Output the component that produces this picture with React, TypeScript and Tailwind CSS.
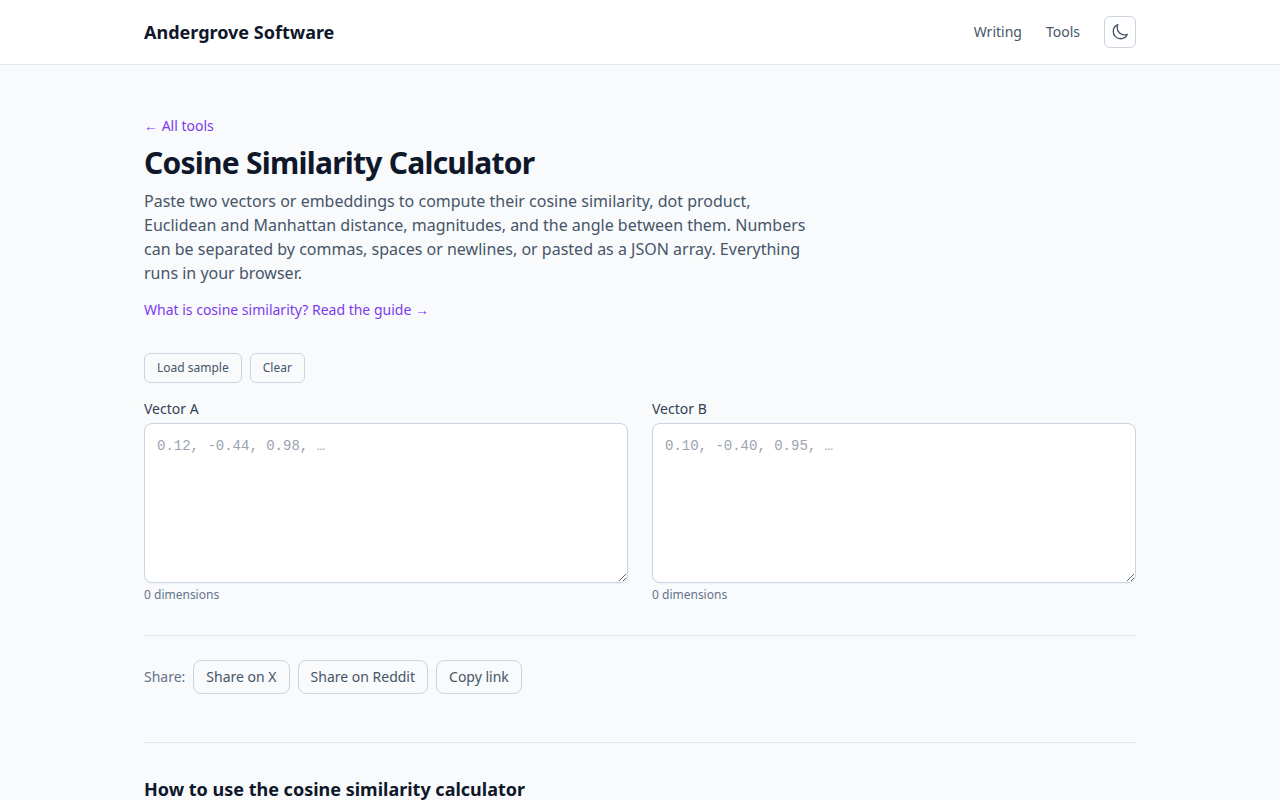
import { useState } from "react";

const SAMPLE_A = "0.12, -0.44, 0.98, 0.31";
const SAMPLE_B = "0.10, -0.40, 0.95, 0.28";

function parseVector(text: string): number[] {
  return text
    .replace(/[[\]]/g, " ")
    .split(/[\s,]+/)
    .filter(Boolean)
    .map(Number)
    .filter((value) => Number.isFinite(value));
}

type VectorFieldProps = {
  id: string;
  label: string;
  placeholder: string;
  value: string;
  onChange: (value: string) => void;
};

function VectorField({ id, label, placeholder, value, onChange }: VectorFieldProps) {
  return (
    <div>
      <label htmlFor={id} className="mb-1 block text-sm text-[#334155]">
        {label}
      </label>
      <textarea
        id={id}
        value={value}
        onChange={(event) => onChange(event.target.value)}
        placeholder={placeholder}
        spellCheck={false}
        className="block h-40 w-full rounded-lg border border-[#cbd5e1] bg-white p-3 font-['Liberation_Mono',monospace] text-sm text-slate-900 shadow-[0_1px_2px_0_rgb(0_0_0/0.05)] placeholder:text-[#9ca3af]"
      />
      <p className="mt-1 text-xs text-[#64748b]">{parseVector(value).length} dimensions</p>
    </div>
  );
}

export default function App() {
  const [vectorA, setVectorA] = useState("");
  const [vectorB, setVectorB] = useState("");

  function loadSample() {
    setVectorA(SAMPLE_A);
    setVectorB(SAMPLE_B);
  }

  function clear() {
    setVectorA("");
    setVectorB("");
  }

  const smallButton =
    "rounded-md border border-[#cbd5e1] px-3 py-1.5 text-xs text-[#475569] hover:bg-slate-100";
  const shareButton =
    "rounded-lg border border-[#cbd5e1] px-3 py-1.5 text-sm text-[#475569] hover:bg-slate-100";

  return (
    <div className="min-h-screen bg-[#f8fafc] font-['Noto_Sans',sans-serif] text-[#0f172a]">
      <header className="border-b border-[#e2e8f0] bg-white">
        <div className="mx-auto flex max-w-5xl items-center justify-between px-4 py-4">
          <a href="#" className="text-lg font-bold">
            Andergrove Software
          </a>
          <nav className="flex items-center gap-6 text-sm text-[#475569]">
            <a href="#writing">Writing</a>
            <a href="#tools">Tools</a>
            <button
              type="button"
              aria-label="Toggle dark mode"
              className="flex size-8 items-center justify-center rounded-md border border-[#cbd5e1]"
            >
              <svg
                viewBox="0 0 24 24"
                className="size-[18px]"
                fill="none"
                stroke="currentColor"
                strokeWidth={1.8}
                strokeLinecap="round"
                strokeLinejoin="round"
              >
                <path d="M21.752 15.002A9.72 9.72 0 0 1 18 15.75c-5.385 0-9.75-4.365-9.75-9.75 0-1.33.266-2.597.748-3.752A9.753 9.753 0 0 0 3 11.25C3 16.635 7.365 21 12.75 21a9.753 9.753 0 0 0 9.002-5.998Z" />
              </svg>
            </button>
          </nav>
        </div>
      </header>

      <main className="mx-auto max-w-5xl px-4 py-12">
        <a href="#tools" className="text-sm text-[#7c3aed] hover:underline">
          ← All tools
        </a>
        <h1 className="mt-2 text-3xl font-bold tracking-tight">Cosine Similarity Calculator</h1>
        <p className="mt-2 max-w-2xl text-[#475569]">
          Paste two vectors or embeddings to compute their cosine similarity, dot product, Euclidean
          and Manhattan distance, magnitudes, and the angle between them. Numbers can be separated by
          commas, spaces or newlines, or pasted as a JSON array. Everything runs in your browser.
        </p>
        <p className="mt-3">
          <a href="#guide" className="text-sm text-[#7c3aed] hover:underline">
            What is cosine similarity? Read the guide →
          </a>
        </p>

        <div className="mt-8 flex gap-2">
          <button type="button" onClick={loadSample} className={smallButton}>
            Load sample
          </button>
          <button type="button" onClick={clear} className={smallButton}>
            Clear
          </button>
        </div>

        <div className="mt-4 grid gap-6 md:grid-cols-2">
          <VectorField
            id="vector-a"
            label="Vector A"
            placeholder="0.12, -0.44, 0.98, …"
            value={vectorA}
            onChange={setVectorA}
          />
          <VectorField
            id="vector-b"
            label="Vector B"
            placeholder="0.10, -0.40, 0.95, …"
            value={vectorB}
            onChange={setVectorB}
          />
        </div>

        <div className="mt-8 flex flex-wrap items-center gap-2 border-t border-[#e2e8f0] pt-6">
          <span className="text-sm text-[#64748b]">Share:</span>
          <a href="#share-x" className={shareButton}>
            Share on X
          </a>
          <a href="#share-reddit" className={shareButton}>
            Share on Reddit
          </a>
          <button type="button" className={shareButton}>
            Copy link
          </button>
        </div>

        <section className="mt-12 border-t border-[#e2e8f0] pt-8">
          <h2 className="text-lg font-bold">How to use the cosine similarity calculator</h2>
        </section>
      </main>
    </div>
  );
}
